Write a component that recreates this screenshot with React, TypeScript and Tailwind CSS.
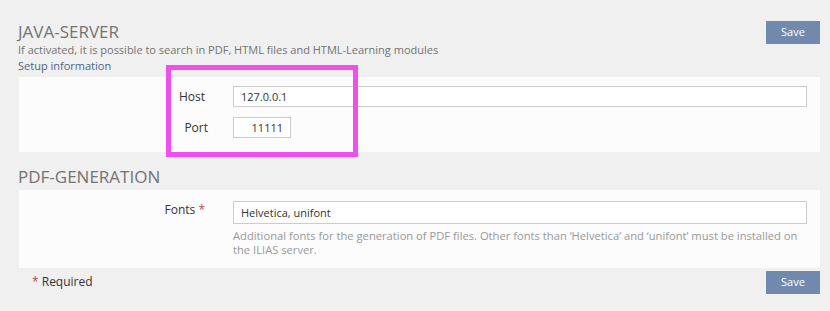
export default function App() {
  const font = { fontFamily: '"Open Sans", "Noto Sans", sans-serif' };

  return (
    <div style={font} className="w-[830px] h-[311px] bg-[#f0f0f0] overflow-hidden text-[#737373]">
      {/* Java server section */}
      <div className="flex justify-between items-start pl-[18px] pr-[10px] pt-[21px]">
        <div>
          <h2 className="text-[17px] leading-[22px] uppercase">Java-Server</h2>
          <p className="text-[11px] leading-[16px] -mt-[1px]">
            If activated, it is possible to search in PDF, HTML files and HTML-Learning modules
          </p>
          <a className="block text-[11px] leading-[15px] text-[#4c6586]">Setup information</a>
        </div>
        <button className="w-[54px] h-[23px] bg-[#7189ad] text-white text-[11px]">Save</button>
      </div>

      <div className="relative ml-[19px] mr-[10px] mt-[4px] h-[75px] bg-[#fcfcfc] pt-[9px]">
        <div className="flex items-center h-[21px]">
          <label className="w-[214px] pr-[28px] text-right text-[12px] text-[#333]">Host</label>
          <input
            readOnly
            value="127.0.0.1"
            className="w-[574px] h-[21px] border border-[#cccccc] bg-white px-[7px] text-[11px] text-[#333] outline-none"
          />
        </div>
        <div className="flex items-center h-[21px] mt-[10px]">
          <label className="w-[214px] pr-[25px] text-right text-[12px] text-[#333]">Port</label>
          <input
            readOnly
            value="11111"
            className="w-[58px] h-[21px] border border-[#cccccc] bg-white px-[7px] text-right text-[11px] text-[#333] outline-none"
          />
        </div>
        {/* highlight frame */}
        <div className="absolute left-[147px] top-[-12px] w-[192px] h-[92px] border-[5px] border-[#f04ef0]" />
      </div>

      {/* PDF generation section */}
      <h2 className="pl-[18px] mt-[14px] text-[17px] leading-[22px] uppercase">PDF-Generation</h2>
      <div className="ml-[19px] mr-[10px] mt-[2px] h-[78px] bg-[#fcfcfc] pt-[9px]">
        <div className="flex">
          <label className="w-[214px] pr-[28px] text-right text-[12px] leading-[22px] text-[#333]">
            Fonts <span className="text-[#b54f40]">*</span>
          </label>
          <div className="w-[574px]">
            <input
              readOnly
              value="Helvetica, unifont"
              className="w-full h-[23px] border border-[#cccccc] bg-white px-[7px] text-[11px] text-[#333] outline-none"
            />
            <p className="mt-[5px] text-[11.2px] leading-[14px] text-[#999999]">
              Additional fonts for the generation of PDF files. Other fonts than ‘Helvetica’ and ‘unifont’ must be installed on the ILIAS server.
            </p>
          </div>
        </div>
      </div>

      <div className="flex justify-between items-start pl-[32px] pr-[10px] mt-[3px]">
        <p className="text-[12px] leading-[20px] text-[#333] mt-[1px]">
          <span className="text-[#b54f40]">*</span> Required
        </p>
        <button className="w-[54px] h-[23px] bg-[#7189ad] text-white text-[11px]">Save</button>
      </div>
    </div>
  );
}
